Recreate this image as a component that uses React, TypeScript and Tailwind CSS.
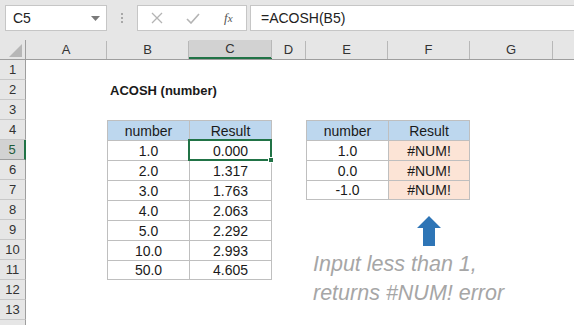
import React from "react";

type Col = { label: string; w: number };

const cols: Col[] = [
  { label: "A", w: 81 },
  { label: "B", w: 82 },
  { label: "C", w: 83 },
  { label: "D", w: 34 },
  { label: "E", w: 82 },
  { label: "F", w: 82 },
  { label: "G", w: 83 },
  { label: "", w: 100 },
];

const left = [
  ["1.0", "0.000"],
  ["2.0", "1.317"],
  ["3.0", "1.763"],
  ["4.0", "2.063"],
  ["5.0", "2.292"],
  ["10.0", "2.993"],
  ["50.0", "4.605"],
];

const right = [
  ["1.0", "#NUM!"],
  ["0.0", "#NUM!"],
  ["-1.0", "#NUM!"],
];

type CellInfo = {
  text?: string;
  bg?: string;
  border?: boolean;
  lastCol?: boolean;
  lastRow?: boolean;
  bold?: boolean;
  align?: "left" | "center";
  selected?: boolean;
};

function getCell(row: number, col: string): CellInfo {
  if (row === 2 && col === "B") return { text: "ACOSH (number)", bold: true, align: "left" };
  // table 1: B4:C11
  if (row >= 4 && row <= 11 && (col === "B" || col === "C")) {
    const isHead = row === 4;
    const text = isHead
      ? col === "B" ? "number" : "Result"
      : left[row - 5][col === "B" ? 0 : 1];
    return {
      text,
      bg: isHead ? "bg-[#bdd7ee]" : "bg-white",
      border: true,
      lastCol: col === "C",
      lastRow: row === 11,
      selected: row === 5 && col === "C",
    };
  }
  // table 2: E4:F7
  if (row >= 4 && row <= 7 && (col === "E" || col === "F")) {
    const isHead = row === 4;
    const text = isHead
      ? col === "E" ? "number" : "Result"
      : right[row - 5][col === "E" ? 0 : 1];
    return {
      text,
      bg: isHead ? "bg-[#bdd7ee]" : col === "F" ? "bg-[#fce4d6]" : "bg-white",
      border: true,
      lastCol: col === "F",
      lastRow: row === 7,
    };
  }
  return {};
}

function Cell({ info, w }: { info: CellInfo; w: number }) {
  return (
    <div
      style={{ width: w }}
      className={`relative h-[20px] shrink-0 flex items-center ${
        info.align === "left" ? "justify-start pl-[3px]" : "justify-center"
      } ${info.bg ?? ""} ${
        info.border ? "border-l border-t border-[#bfbfbf]" : ""
      } ${info.lastCol ? "border-r" : ""} ${info.lastRow ? "border-b" : ""}`}
    >
      {info.text && (
        <span
          className={`whitespace-nowrap leading-none text-[#1a1a1a] ${
            info.bold ? "font-bold text-[13px]" : "text-[14px]"
          }`}
        >
          {info.text}
        </span>
      )}
      {info.selected && (
        <div className="absolute -left-[2px] -top-[2px] -right-[1px] -bottom-[1px] border-2 border-[#217346] z-10">
          <div className="absolute -right-[4px] -bottom-[4px] w-[6px] h-[6px] bg-[#217346] border border-white" />
        </div>
      )}
    </div>
  );
}

export default function App() {
  const rows = Array.from({ length: 14 }, (_, i) => i + 1);

  return (
    <div className="w-[574px] h-[325px] overflow-hidden bg-white font-['Liberation_Sans',Arial,sans-serif]">
      {/* Toolbar */}
      <div className="h-[40px] bg-[#e6e6e6] flex items-start pt-[5px] pl-[5px]">
        <div className="w-[102px] h-[26px] bg-white border border-[#c6c6c6] flex items-center justify-between pl-[7px] pr-[6px]">
          <span className="text-[14px] text-[#222]">C5</span>
          <svg width="9" height="5" viewBox="0 0 9 5">
            <path d="M0 0h9L4.5 5z" fill="#7a7a7a" />
          </svg>
        </div>
        <div className="w-[30px] h-[26px] flex flex-col items-center justify-center gap-[2px]">
          <div className="w-[2px] h-[2px] bg-[#a8a8a8]" />
          <div className="w-[2px] h-[2px] bg-[#a8a8a8]" />
          <div className="w-[2px] h-[2px] bg-[#a8a8a8]" />
        </div>
        <div className="w-[110px] h-[26px] bg-white border border-[#c6c6c6] flex items-center pl-[13px]">
          <svg width="12" height="12" viewBox="0 0 12 12">
            <path d="M1 1l10 10M11 1L1 11" stroke="#b4b4b4" strokeWidth="1.3" />
          </svg>
          <svg width="14" height="11" viewBox="0 0 14 11" className="ml-[23px]">
            <path d="M1 6l4 4 8-9" stroke="#b4b4b4" strokeWidth="1.6" fill="none" />
          </svg>
          <span className="ml-[24px] font-['Liberation_Serif',serif] italic text-[13px] text-[#555]">
            f<span className="text-[11px]">x</span>
          </span>
        </div>
        <div className="flex-1 ml-[3px] h-[26px] bg-white border border-r-0 border-[#c6c6c6] flex items-center pl-[10px]">
          <span className="text-[14px] text-[#222]">=ACOSH(B5)</span>
        </div>
      </div>

      {/* Column headers */}
      <div className="flex h-[20px] bg-[#e6e6e6] border-b border-[#9e9e9e]">
        <div className="w-[26px] shrink-0 border-r border-[#9e9e9e] flex items-end justify-end pr-[3px] pb-[2px]">
          <svg width="13" height="13" viewBox="0 0 13 13">
            <path d="M13 0V13H0z" fill="#b7b7b7" />
          </svg>
        </div>
        {cols.map((c, i) => (
          <div
            key={i}
            style={{ width: c.w }}
            className={`shrink-0 flex items-center justify-center text-[13px] text-[#333] ${
              c.label === "C"
                ? "bg-[#d2d2d2] border-b-2 border-[#217346] text-[#1e5c3a]"
                : ""
            }`}
          >
            <div className="flex-1 text-center">{c.label}</div>
            <div className="w-px h-[18px] bg-[#b8b8b8]" />
          </div>
        ))}
      </div>

      {/* Sheet body */}
      <div className="relative">
        {rows.map((r) => (
          <div key={r} className="flex">
            <div
              className={`w-[26px] h-[20px] shrink-0 flex items-center justify-center text-[13px] border-b ${
                r === 5
                  ? "bg-[#d2d2d2] border-r-2 border-r-[#217346] border-b-[#9e9e9e] text-[#1e5c3a]"
                  : "bg-[#e6e6e6] border-r border-r-[#9e9e9e] border-b-[#c8c8c8] text-[#333]"
              }`}
            >
              {r <= 13 ? r : ""}
            </div>
            {cols.map((c, i) => (
              <Cell key={i} info={getCell(r, c.label)} w={c.w} />
            ))}
          </div>
        ))}

        {/* Arrow shape */}
        <svg
          width="24"
          height="30"
          viewBox="0 0 24 30"
          className="absolute left-[417px] top-[156px]"
        >
          <path d="M12 0L24 12H18V30H6V12H0z" fill="#2e75b6" />
        </svg>

        {/* Callout text */}
        <div className="absolute left-[313px] top-[190px] italic text-[21.5px] leading-[29px] text-[#a6a6a6] whitespace-nowrap">
          <div>Input less than 1,</div>
          <div>returns #NUM! error</div>
        </div>
      </div>
    </div>
  );
}
